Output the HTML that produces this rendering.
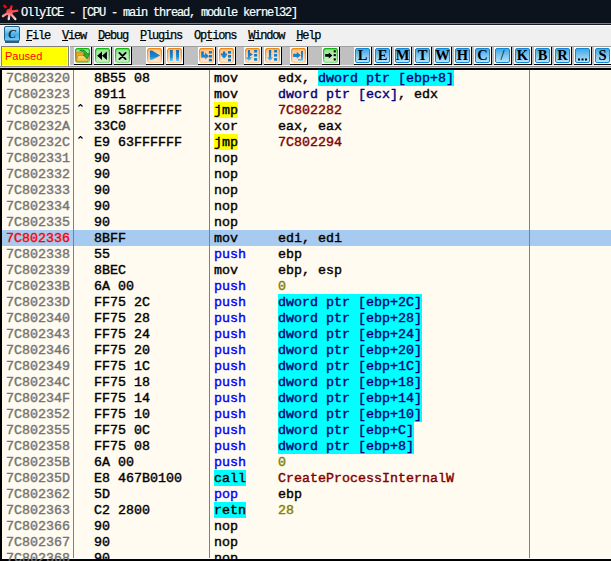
<!DOCTYPE html>
<html><head><meta charset="utf-8">
<style>
*{margin:0;padding:0;box-sizing:border-box}
html,body{width:611px;height:561px;overflow:hidden}
body{position:relative;background:#fffbf0;font-family:"Liberation Mono",monospace}
.ab{position:absolute}
#tb{left:0;top:0;width:611px;height:23px;background:#0c131d}
#tt{left:21px;top:6px;font-size:12px;-webkit-text-stroke-width:0.2px;line-height:14px;letter-spacing:-1.2px;color:#fff;white-space:pre}
#menu{left:0;top:26px;width:611px;height:20px;background:#f0f0f0}
#mt{left:26px;top:29px;font-size:12px;-webkit-text-stroke-width:0.25px;line-height:14px;letter-spacing:-1.2px;color:#000;white-space:pre}
#mt u{text-decoration:underline;text-decoration-thickness:1px;text-underline-offset:1px}
#tool{left:0;top:46px;width:611px;height:22px;background:#c0c0c0}
.btn{position:absolute;top:47px;width:18px;height:18px;background:#fff;border-right:1px solid #000;border-bottom:1px solid #000}
.btn svg{position:absolute;left:1px;top:1px}
#code{left:0;top:68px;width:611px;height:493px}
.r{position:absolute;left:0;width:611px;height:16px;font-size:13.333px;font-weight:normal;-webkit-text-stroke-width:0.4px;line-height:18px;white-space:pre;color:#000}
.r.sel{background:#a6caf0;left:2px;width:609px}
.r span{position:relative}
.r>span{position:absolute;top:0}
.bcy,.bye{display:inline-block;height:16px;vertical-align:top}
.sel>span{}
.a{left:6px;color:#747474}
.sel .a{left:4px}
.ra{color:#ff0000!important}
.h{left:78px}
.d{left:214px}
.sel .h{left:76px}
.sel .d{left:212px}
.nv{color:#000080}
.bl{color:#0000ff}
.dr{color:#800000}
.ol{color:#808000}
.bcy{background:#00ffff}
.bye{background:#ffff00}
.car{position:absolute;left:78px;top:2px}
.sep{position:absolute;top:70px;width:1px;height:488px;background:#808080}
</style></head><body>
<div id="tb" class="ab"></div>
<svg class="ab" style="left:0;top:2px" width="20" height="20" viewBox="0 0 20 20">
<defs><linearGradient id="rg" gradientUnits="userSpaceOnUse" x1="0" y1="3" x2="0" y2="19"><stop offset="0" stop-color="#ff0000"/><stop offset="0.45" stop-color="#f05a5a"/><stop offset="1" stop-color="#ffffff"/></linearGradient></defs>
<g stroke="url(#rg)" stroke-width="2.4" stroke-linecap="round" fill="none"><path d="M9.5 10 L11.5 4.3 M9.5 10 L17.3 8.6 M9.5 10 L3 14 M9.5 10 L8.8 17 M10 11 L15.3 17"/></g>
<circle cx="9.5" cy="10" r="3.2" fill="url(#rg)"/><ellipse cx="5" cy="4.5" rx="2.2" ry="1.4" transform="rotate(45 5 4.5)" fill="#ff0000"/>
</svg>
<div id="tt" class="ab">OllyICE - [CPU - main thread, module kernel32]</div>
<div class="ab" style="left:0;top:23px;width:611px;height:1px;background:#7a7f88"></div>
<div class="ab" style="left:0;top:24px;width:611px;height:1px;background:#1a1e24"></div>
<div class="ab" style="left:0;top:25px;width:611px;height:1px;background:#ffffff"></div>
<div id="menu" class="ab"></div>
<svg class="ab" style="left:4px;top:26px" width="16" height="17" viewBox="0 0 16 17">
<defs><linearGradient id="cg" x1="0" y1="0" x2="0" y2="1"><stop offset="0" stop-color="#c4eafc"/><stop offset="0.55" stop-color="#44b0ea"/><stop offset="1" stop-color="#7cc8f2"/></linearGradient></defs>
<rect x="0.5" y="0.5" width="15" height="14.5" rx="1.5" fill="url(#cg)" stroke="#1a5c86"/>
<rect x="1" y="15" width="14" height="2" fill="#2a5f80"/>
<text x="8" y="11.8" text-anchor="middle" font-family="Liberation Serif" font-style="italic" font-weight="bold" font-size="11.5" fill="#14283a">C</text>
</svg>
<div id="mt" class="ab"><u>F</u>ile  <u>V</u>iew  <u>D</u>ebug  <u>P</u>lugins  Op<u>t</u>ions  <u>W</u>indow  <u>H</u>elp</div>
<div id="tool" class="ab"></div>
<div class="ab" style="left:0;top:46px;width:611px;height:1px;background:#a0a0a0"></div>
<div class="ab" style="left:0;top:65px;width:611px;height:1px;background:#f4f4f4"></div>
<div class="ab" style="left:0;top:66px;width:611px;height:1px;background:#909090"></div>
<div class="ab" style="left:0;top:67px;width:611px;height:1px;background:#c8c8c8"></div>
<div class="ab" style="left:0;top:46px;width:1px;height:20px;background:#f0f0f0"></div>
<div class="ab" style="left:1px;top:46px;width:67px;height:20px;background:#fff;border-left:1px solid #808080;border-top:1px solid #808080"></div>
<div class="ab" style="left:2px;top:47px;width:65px;height:18px;background:#ffff00"></div>
<div class="ab" style="left:68px;top:46px;width:1px;height:20px;background:#808080"></div>
<div class="ab" style="left:69px;top:46px;width:1px;height:20px;background:#ffffff"></div>
<div class="ab" style="left:5px;top:49px;font-family:'Liberation Sans';font-size:11px;line-height:14px;color:#ff0000">Paused</div>
<svg width="0" height="0" style="position:absolute"><defs><linearGradient id="gG" x1="0" y1="0" x2="0" y2="1"><stop offset="0" stop-color="#8ade8a"/><stop offset="0.45" stop-color="#b6eeb6"/><stop offset="1" stop-color="#c8f2c8"/></linearGradient><linearGradient id="sG" x1="0" y1="0" x2="0" y2="1"><stop offset="0" stop-color="#10b810"/><stop offset="0.7" stop-color="#40c840"/><stop offset="1" stop-color="#90e090"/></linearGradient><linearGradient id="sO" x1="0" y1="0" x2="0" y2="1"><stop offset="0" stop-color="#f08a10"/><stop offset="0.7" stop-color="#f4a850"/><stop offset="1" stop-color="#fcd0a0"/></linearGradient><linearGradient id="gO" x1="0" y1="0" x2="0" y2="1"><stop offset="0" stop-color="#ffc084"/><stop offset="0.5" stop-color="#ffd6ae"/><stop offset="1" stop-color="#ffe8d4"/></linearGradient><linearGradient id="gB" x1="0" y1="0" x2="0" y2="1"><stop offset="0" stop-color="#3aa6e6"/><stop offset="1" stop-color="#bfe6fa"/></linearGradient><linearGradient id="gF" x1="0" y1="0" x2="0" y2="1"><stop offset="0" stop-color="#ffe27a"/><stop offset="1" stop-color="#f2b436"/></linearGradient><linearGradient id="gBl" gradientUnits="userSpaceOnUse" x1="0" y1="2" x2="0" y2="13"><stop offset="0" stop-color="#0a6cbc"/><stop offset="0.6" stop-color="#1a88d0"/><stop offset="1" stop-color="#6ccdf8"/></linearGradient></defs></svg>
<div class="btn" style="left:74px"><svg width="16" height="16" viewBox="0 0 16 16"><rect x="0.6" y="0.6" width="13.8" height="13.8" rx="2" fill="url(#gG)" stroke="url(#sG)" stroke-width="1.3"/><path d="M1.2 13.7 V5.2 Q1.2 4.1 2.3 4.1 H6.3 L7.6 5.4 H12.6 V13.7z" fill="#e9a51e" stroke="#b87c0c" stroke-width="0.7"/><path d="M1.2 13.7 L2.9 7.6 H14.2 L12.6 13.7z" fill="url(#gF)" stroke="#b87c0c" stroke-width="0.6"/><path d="M4.6 2.2 Q10.8 1.2 12.2 5.9 L14.7 5.4 L12.1 10.9 L8.2 6.9 L10.5 6.6 Q9.4 3.9 4.6 2.2z" fill="#2eb42e" stroke="#0c6c0c" stroke-width="0.6"/></svg></div>
<div class="btn" style="left:94px"><svg width="16" height="16" viewBox="0 0 16 16"><rect x="0.6" y="0.6" width="13.8" height="13.8" rx="2" fill="url(#gG)" stroke="url(#sG)" stroke-width="1.3"/><path d="M7 3.6 L2.1 7.8 L7 12z M11.9 3.6 L7 7.8 L11.9 12z" fill="#000"/></svg></div>
<div class="btn" style="left:114px"><svg width="16" height="16" viewBox="0 0 16 16"><rect x="0.6" y="0.6" width="13.8" height="13.8" rx="2" fill="url(#gG)" stroke="url(#sG)" stroke-width="1.3"/><path d="M4.4 4.9 L10.6 11.1 M10.6 4.9 L4.4 11.1" stroke="#000" stroke-width="1.9" stroke-linecap="round"/></svg></div>
<div class="btn" style="left:146px"><svg width="16" height="16" viewBox="0 0 16 16"><rect x="0.6" y="0.6" width="13.8" height="13.8" rx="2" fill="url(#gO)" stroke="url(#sO)" stroke-width="1.3"/><path d="M2.9 2.6 L5 2.6 L13.1 7.4 L5 12.1 L2.9 12.1z" fill="url(#gBl)"/></svg></div>
<div class="btn" style="left:166px"><svg width="16" height="16" viewBox="0 0 16 16"><rect x="0.6" y="0.6" width="13.8" height="13.8" rx="2" fill="url(#gO)" stroke="url(#sO)" stroke-width="1.3"/><rect x="2.9" y="1.9" width="2.9" height="11.1" fill="url(#gBl)"/><rect x="9.1" y="1.9" width="2.9" height="11.1" fill="url(#gBl)"/></svg></div>
<div class="btn" style="left:198px"><svg width="16" height="16" viewBox="0 0 16 16"><rect x="0.6" y="0.6" width="13.8" height="13.8" rx="2" fill="url(#gO)" stroke="url(#sO)" stroke-width="1.3"/><path d="M2.2 3.6 h2.6 v3.1 h1.3 v-2.1 l3.8 3.6 l-3.8 3.6 v-2.1 h-3.9z" fill="url(#gBl)"/><rect x="9.9" y="3" width="3" height="2.6" fill="#0a7ccc"/><rect x="9.9" y="7" width="3" height="2.6" fill="#0a7ccc"/><rect x="9.9" y="10.8" width="3" height="2.6" fill="#0a7ccc"/></svg></div>
<div class="btn" style="left:218px"><svg width="16" height="16" viewBox="0 0 16 16"><rect x="0.6" y="0.6" width="13.8" height="13.8" rx="2" fill="url(#gO)" stroke="url(#sO)" stroke-width="1.3"/><path d="M3.9 3.4 h2.3 v2.1 h1.9 v1.8 h-1.9 v0.3 h1.7 l-2.85 3.2 l-2.85 -3.2 h1.7 v-0.3 h-2 v-1.8 h2z" fill="url(#gBl)"/><rect x="9" y="3" width="3" height="2.6" fill="#0a7ccc"/><rect x="9" y="7" width="3" height="2.6" fill="#0a7ccc"/><rect x="9" y="10.8" width="3" height="2.6" fill="#0a7ccc"/></svg></div>
<div class="btn" style="left:244px"><svg width="16" height="16" viewBox="0 0 16 16"><rect x="0.6" y="0.6" width="13.8" height="13.8" rx="2" fill="url(#gO)" stroke="url(#sO)" stroke-width="1.3"/><path d="M2.9 1.9 h2 v2.7 l2.9 2 l-2.9 2 v0.9 h2.3 l-3.3 3.5 l-3.3 -3.5 h2.3z" fill="url(#gBl)"/><rect x="9.1" y="1.9" width="3" height="2.6" fill="#0a7ccc"/><rect x="9.1" y="6" width="3" height="2.6" fill="#0a7ccc"/><rect x="9.1" y="10.1" width="3" height="2.6" fill="#0a7ccc"/></svg></div>
<div class="btn" style="left:264px"><svg width="16" height="16" viewBox="0 0 16 16"><rect x="0.6" y="0.6" width="13.8" height="13.8" rx="2" fill="url(#gO)" stroke="url(#sO)" stroke-width="1.3"/><path d="M3.9 1.9 h2.3 v7.6 h1.6 l-2.75 3.5 l-2.85 -3.5 h1.7z" fill="url(#gBl)"/><rect x="9.1" y="1.9" width="3" height="2.6" fill="#0a7ccc"/><rect x="9.1" y="6" width="3" height="2.6" fill="#0a7ccc"/><rect x="9.1" y="10.1" width="3" height="2.6" fill="#0a7ccc"/></svg></div>
<div class="btn" style="left:290px"><svg width="16" height="16" viewBox="0 0 16 16"><rect x="0.6" y="0.6" width="13.8" height="13.8" rx="2" fill="url(#gO)" stroke="url(#sO)" stroke-width="1.3"/><path d="M2.1 5.7 h3.7 v-1.8 l4 3.45 l-4 3.45 v-1.9 h-3.7z" fill="url(#gBl)"/><path d="M10.1 3 h1.8 v9.7 h-4.9 v-1.6 h3.1z" fill="url(#gBl)"/></svg></div>
<div class="btn" style="left:322px"><svg width="16" height="16" viewBox="0 0 16 16"><rect x="0.6" y="0.6" width="13.8" height="13.8" rx="2" fill="url(#gG)" stroke="url(#sG)" stroke-width="1.3"/><path d="M2.2 6.1 h3.6 v-1.7 l3.6 3 l-3.6 3 v-1.7 h-3.6z" fill="#000"/><rect x="10.7" y="2.3" width="2.1" height="2.1" fill="#000"/><rect x="10.7" y="6.1" width="2.1" height="2.1" fill="#000"/><rect x="10.7" y="10.3" width="2.1" height="2.2" fill="#000"/></svg></div>
<div class="btn" style="left:354px"><svg width="16" height="16" viewBox="0 0 16 16"><rect x="0.5" y="0.5" width="14" height="14" rx="1.5" fill="url(#gB)" stroke="#1286d2"/><text x="7.5" y="12.2" text-anchor="middle" font-family="Liberation Serif" font-weight="bold" font-size="14.5" fill="#000">L</text></svg></div>
<div class="btn" style="left:374px"><svg width="16" height="16" viewBox="0 0 16 16"><rect x="0.5" y="0.5" width="14" height="14" rx="1.5" fill="url(#gB)" stroke="#1286d2"/><text x="7.5" y="12.2" text-anchor="middle" font-family="Liberation Serif" font-weight="bold" font-size="14.5" fill="#000">E</text></svg></div>
<div class="btn" style="left:394px"><svg width="16" height="16" viewBox="0 0 16 16"><rect x="0.5" y="0.5" width="14" height="14" rx="1.5" fill="url(#gB)" stroke="#1286d2"/><text x="7.5" y="12.2" text-anchor="middle" font-family="Liberation Serif" font-weight="bold" font-size="14.5" fill="#000">M</text></svg></div>
<div class="btn" style="left:414px"><svg width="16" height="16" viewBox="0 0 16 16"><rect x="0.5" y="0.5" width="14" height="14" rx="1.5" fill="url(#gB)" stroke="#1286d2"/><text x="7.5" y="12.2" text-anchor="middle" font-family="Liberation Serif" font-weight="bold" font-size="14.5" fill="#000">T</text></svg></div>
<div class="btn" style="left:434px"><svg width="16" height="16" viewBox="0 0 16 16"><rect x="0.5" y="0.5" width="14" height="14" rx="1.5" fill="url(#gB)" stroke="#1286d2"/><text x="7.5" y="12.2" text-anchor="middle" font-family="Liberation Serif" font-weight="bold" font-size="14.5" fill="#000">W</text></svg></div>
<div class="btn" style="left:454px"><svg width="16" height="16" viewBox="0 0 16 16"><rect x="0.5" y="0.5" width="14" height="14" rx="1.5" fill="url(#gB)" stroke="#1286d2"/><text x="7.5" y="12.2" text-anchor="middle" font-family="Liberation Serif" font-weight="bold" font-size="14.5" fill="#000">H</text></svg></div>
<div class="btn" style="left:474px"><svg width="16" height="16" viewBox="0 0 16 16"><rect x="0.5" y="0.5" width="14" height="14" rx="1.5" fill="url(#gB)" stroke="#1286d2"/><text x="7.5" y="12.2" text-anchor="middle" font-family="Liberation Serif" font-weight="bold" font-size="14.5" fill="#000">C</text></svg></div>
<div class="btn" style="left:494px"><svg width="16" height="16" viewBox="0 0 16 16"><rect x="0.5" y="0.5" width="14" height="14" rx="1.5" fill="url(#gB)" stroke="#1286d2"/><text x="7.5" y="12.2" text-anchor="middle" font-family="Liberation Serif" font-weight="normal" font-size="14.5" fill="#000">/</text></svg></div>
<div class="btn" style="left:514px"><svg width="16" height="16" viewBox="0 0 16 16"><rect x="0.5" y="0.5" width="14" height="14" rx="1.5" fill="url(#gB)" stroke="#1286d2"/><text x="7.5" y="12.2" text-anchor="middle" font-family="Liberation Serif" font-weight="bold" font-size="14.5" fill="#000">K</text></svg></div>
<div class="btn" style="left:534px"><svg width="16" height="16" viewBox="0 0 16 16"><rect x="0.5" y="0.5" width="14" height="14" rx="1.5" fill="url(#gB)" stroke="#1286d2"/><text x="7.5" y="12.2" text-anchor="middle" font-family="Liberation Serif" font-weight="bold" font-size="14.5" fill="#000">B</text></svg></div>
<div class="btn" style="left:554px"><svg width="16" height="16" viewBox="0 0 16 16"><rect x="0.5" y="0.5" width="14" height="14" rx="1.5" fill="url(#gB)" stroke="#1286d2"/><text x="7.5" y="12.2" text-anchor="middle" font-family="Liberation Serif" font-weight="bold" font-size="14.5" fill="#000">R</text></svg></div>
<div class="btn" style="left:574px"><svg width="16" height="16" viewBox="0 0 16 16"><rect x="0.5" y="0.5" width="14" height="14" rx="1.5" fill="url(#gB)" stroke="#1286d2"/><rect x="3" y="10.5" width="2" height="2" fill="#000"/><rect x="6.5" y="10.5" width="2" height="2" fill="#000"/><rect x="10" y="10.5" width="2" height="2" fill="#000"/></svg></div>
<div class="btn" style="left:594px"><svg width="16" height="16" viewBox="0 0 16 16"><rect x="0.5" y="0.5" width="14" height="14" rx="1.5" fill="url(#gB)" stroke="#1286d2"/><text x="7.5" y="12.2" text-anchor="middle" font-family="Liberation Serif" font-weight="bold" font-size="14.5" fill="#000">S</text></svg></div>
<div class="ab" style="left:0;top:68px;width:611px;height:2px;background:#000"></div>
<div class="ab" style="left:0;top:70px;width:2px;height:491px;background:#000"></div>
<div class="ab" style="left:0;top:559px;width:611px;height:2px;background:#000"></div>
<div class="ab" style="left:2px;top:558px;width:609px;height:1px;background:#fff"></div>
<div class="r" style="top:70px"><span class="a">7C802320</span><span class="h">  8B55 08</span><span class="d">mov     edx, <span class="nv bcy">dword ptr [ebp+8]</span></span></div>
<div class="r" style="top:86px"><span class="a">7C802323</span><span class="h">  8911</span><span class="d">mov     <span class="nv">dword ptr [ecx]</span>, edx</span></div>
<div class="r" style="top:102px"><svg class="car" width="7" height="5" viewBox="0 0 7 5"><path d="M0.5 2.5 L2.5 0.5 L4.5 2.5" stroke="#000" stroke-width="1.1" fill="none"/></svg><span class="a">7C802325</span><span class="h">  E9 58FFFFFF</span><span class="d"><span class="bye">jmp</span>     <span class="dr">7C802282</span></span></div>
<div class="r" style="top:118px"><span class="a">7C80232A</span><span class="h">  33C0</span><span class="d">xor     eax, eax</span></div>
<div class="r" style="top:134px"><svg class="car" width="7" height="5" viewBox="0 0 7 5"><path d="M0.5 2.5 L2.5 0.5 L4.5 2.5" stroke="#000" stroke-width="1.1" fill="none"/></svg><span class="a">7C80232C</span><span class="h">  E9 63FFFFFF</span><span class="d"><span class="bye">jmp</span>     <span class="dr">7C802294</span></span></div>
<div class="r" style="top:150px"><span class="a">7C802331</span><span class="h">  90</span><span class="d">nop     </span></div>
<div class="r" style="top:166px"><span class="a">7C802332</span><span class="h">  90</span><span class="d">nop     </span></div>
<div class="r" style="top:182px"><span class="a">7C802333</span><span class="h">  90</span><span class="d">nop     </span></div>
<div class="r" style="top:198px"><span class="a">7C802334</span><span class="h">  90</span><span class="d">nop     </span></div>
<div class="r" style="top:214px"><span class="a">7C802335</span><span class="h">  90</span><span class="d">nop     </span></div>
<div class="r sel" style="top:230px"><span class="a ra">7C802336</span><span class="h">  8BFF</span><span class="d">mov     edi, edi</span></div>
<div class="r" style="top:246px"><span class="a">7C802338</span><span class="h">  55</span><span class="d"><span class="bl">push</span>    ebp</span></div>
<div class="r" style="top:262px"><span class="a">7C802339</span><span class="h">  8BEC</span><span class="d">mov     ebp, esp</span></div>
<div class="r" style="top:278px"><span class="a">7C80233B</span><span class="h">  6A 00</span><span class="d"><span class="bl">push</span>    <span class="ol">0</span></span></div>
<div class="r" style="top:294px"><span class="a">7C80233D</span><span class="h">  FF75 2C</span><span class="d"><span class="bl">push</span>    <span class="nv bcy">dword ptr [ebp+2C]</span></span></div>
<div class="r" style="top:310px"><span class="a">7C802340</span><span class="h">  FF75 28</span><span class="d"><span class="bl">push</span>    <span class="nv bcy">dword ptr [ebp+28]</span></span></div>
<div class="r" style="top:326px"><span class="a">7C802343</span><span class="h">  FF75 24</span><span class="d"><span class="bl">push</span>    <span class="nv bcy">dword ptr [ebp+24]</span></span></div>
<div class="r" style="top:342px"><span class="a">7C802346</span><span class="h">  FF75 20</span><span class="d"><span class="bl">push</span>    <span class="nv bcy">dword ptr [ebp+20]</span></span></div>
<div class="r" style="top:358px"><span class="a">7C802349</span><span class="h">  FF75 1C</span><span class="d"><span class="bl">push</span>    <span class="nv bcy">dword ptr [ebp+1C]</span></span></div>
<div class="r" style="top:374px"><span class="a">7C80234C</span><span class="h">  FF75 18</span><span class="d"><span class="bl">push</span>    <span class="nv bcy">dword ptr [ebp+18]</span></span></div>
<div class="r" style="top:390px"><span class="a">7C80234F</span><span class="h">  FF75 14</span><span class="d"><span class="bl">push</span>    <span class="nv bcy">dword ptr [ebp+14]</span></span></div>
<div class="r" style="top:406px"><span class="a">7C802352</span><span class="h">  FF75 10</span><span class="d"><span class="bl">push</span>    <span class="nv bcy">dword ptr [ebp+10]</span></span></div>
<div class="r" style="top:422px"><span class="a">7C802355</span><span class="h">  FF75 0C</span><span class="d"><span class="bl">push</span>    <span class="nv bcy">dword ptr [ebp+C]</span></span></div>
<div class="r" style="top:438px"><span class="a">7C802358</span><span class="h">  FF75 08</span><span class="d"><span class="bl">push</span>    <span class="nv bcy">dword ptr [ebp+8]</span></span></div>
<div class="r" style="top:454px"><span class="a">7C80235B</span><span class="h">  6A 00</span><span class="d"><span class="bl">push</span>    <span class="ol">0</span></span></div>
<div class="r" style="top:470px"><span class="a">7C80235D</span><span class="h">  E8 467B0100</span><span class="d"><span class="bcy">call</span>    <span class="dr">CreateProcessInternalW</span></span></div>
<div class="r" style="top:486px"><span class="a">7C802362</span><span class="h">  5D</span><span class="d"><span class="bl">pop</span>     ebp</span></div>
<div class="r" style="top:502px"><span class="a">7C802363</span><span class="h">  C2 2800</span><span class="d"><span class="bcy">retn</span>    <span class="ol">28</span></span></div>
<div class="r" style="top:518px"><span class="a">7C802366</span><span class="h">  90</span><span class="d">nop     </span></div>
<div class="r" style="top:534px"><span class="a">7C802367</span><span class="h">  90</span><span class="d">nop     </span></div>
<div class="r" style="top:550px"><span class="a">7C802368</span><span class="h">  90</span><span class="d">nop     </span></div>
<div class="sep" style="left:73px"></div>
<div class="sep" style="left:209px"></div>
<div class="sep" style="left:529px"></div>
</body></html>
